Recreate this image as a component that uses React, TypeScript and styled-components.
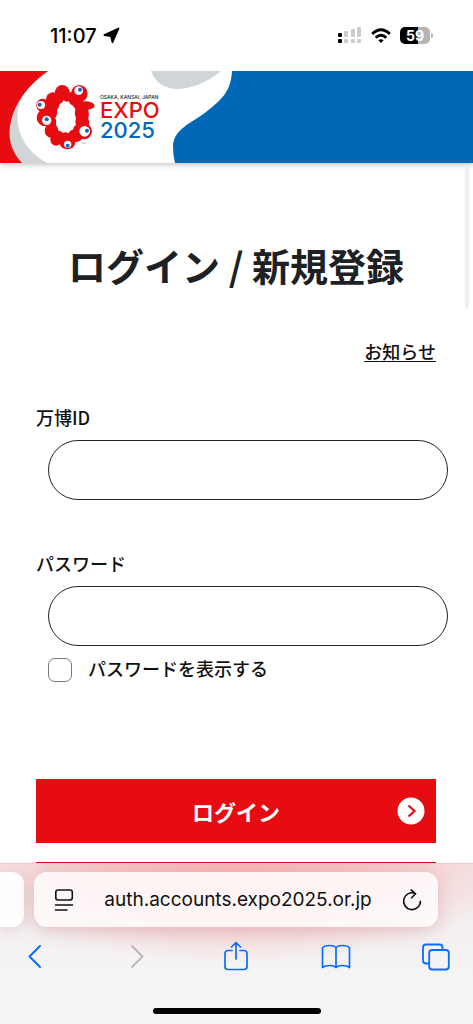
import React from "react";
import styled, { createGlobalStyle } from "styled-components";

const Global = createGlobalStyle`
  *, *::before, *::after { box-sizing: border-box; }
  body { margin: 0; background: #fff; }
  button, input { font: inherit; margin: 0; }
`;

const jp = `"Noto Sans CJK JP", "Noto Sans", sans-serif`;
const ui = `Inter, "Liberation Sans", sans-serif`;
const red = "#e60c12";
const blue = "#0068b7";

const Screen = styled.div`
  display: grid;
  grid-template-rows: auto minmax(0, 1fr) auto;
  height: 100vh;
  background: #fff;
  color: #1d2124;
  font-family: ${jp};
`;

const StatusBar = styled.div`
  display: flex;
  align-items: center;
  justify-content: space-between;
  height: 71px;
  padding: 0 40px 0 50px;
  color: #000;
  font-family: ${ui};
`;

const StatusGroup = styled.div<{ $gap: number }>`
  display: flex;
  align-items: center;
  gap: ${(p) => p.$gap}px;
`;

const Clock = styled.time`
  font-size: 20px;
  font-weight: 500;
  line-height: 24px;
`;

const Battery = styled.div`
  display: flex;
  align-items: center;
  gap: 1px;
`;

const BatteryBody = styled.div`
  width: 30px;
  height: 17px;
  border-radius: 5px;
  background: linear-gradient(90deg, #000 59%, #b5b5b5 59%);
  color: #fff;
  font-size: 14px;
  font-weight: 700;
  line-height: 17px;
  text-align: center;
`;

const BatteryCap = styled.div`
  width: 2px;
  height: 5px;
  border-radius: 0 2px 2px 0;
  background: #b5b5b5;
`;

const Page = styled.div`
  position: relative;
  overflow: hidden;
`;

const ScrollThumb = styled.div`
  position: absolute;
  top: 94px;
  right: 4px;
  width: 4px;
  height: 144px;
  border-radius: 2px;
  background: #f0f0f0;
`;

const Banner = styled.header`
  position: relative;
  display: flex;
  height: 92px;
  background: ${blue};
  box-shadow: 0 2px 5px rgba(0, 0, 0, 0.22);
`;

const Wordmark = styled.div`
  position: absolute;
  top: 23px;
  left: 100px;
  display: flex;
  flex-direction: column;
  font-family: ${ui};
`;

const Place = styled.span`
  color: #222;
  font-size: 5px;
  font-weight: 500;
  line-height: 6px;
`;

const MarkLine = styled.span<{ $color: string }>`
  color: ${(p) => p.$color};
  font-size: 22px;
  font-weight: 500;
  line-height: 20px;
`;

const Content = styled.main`
  display: flex;
  flex-direction: column;
  padding: 0 37px 0 36px;
`;

const Title = styled.h1`
  margin: 74px 0 0;
  font-size: 38px;
  font-weight: 700;
  line-height: 56px;
  text-align: center;
`;

const NewsLink = styled.a`
  align-self: flex-end;
  margin-top: 44px;
  color: #111;
  font-size: 18px;
  font-weight: 500;
  line-height: 28px;
  text-decoration: underline;
  text-decoration-thickness: 1px;
  text-underline-offset: 2px;
`;

const Form = styled.form`
  display: flex;
  flex-direction: column;
  margin-top: 38px;
  color: #111;
  font-size: 18px;
  font-weight: 500;
  line-height: 28px;
`;

const Field = styled.div<{ $after: number }>`
  display: flex;
  flex-direction: column;
  gap: 9px;
  margin-bottom: ${(p) => p.$after}px;
`;

const TextBox = styled.input`
  width: 100%;
  height: 60px;
  margin-left: 12px;
  padding: 0 24px;
  border: 1px solid #222;
  border-radius: 30px;
  background: #fff;
`;

const CheckRow = styled.label`
  display: flex;
  align-items: flex-start;
  gap: 16px;
  margin: 0 0 97px 12px;
`;

const Check = styled.input`
  appearance: none;
  width: 24px;
  height: 24px;
  margin-top: 4px;
  border: 1px solid #777;
  border-radius: 7px;
  background: #fff;
`;

const LoginButton = styled.button`
  display: grid;
  grid-template-columns: 28px 1fr 28px;
  align-items: center;
  height: 64px;
  padding: 0 11px;
  border: 0;
  background: ${red};
  color: #fff;
  font-size: 22px;
  font-weight: 700;
  line-height: 32px;
`;

const ButtonLabel = styled.span`
  grid-column: 2;
`;

const NextPanel = styled.div`
  height: 64px;
  margin-top: 19px;
  border: 2px solid ${red};
`;

const BrowserBar = styled.footer`
  display: flex;
  flex-direction: column;
  height: 161px;
  overflow: hidden;
  border-top: 1px solid #e3cfd1;
  background:
    radial-gradient(ellipse 58% 100px at 50% 0, rgba(250, 165, 165, 0.75) 0%, rgba(248, 175, 175, 0.6) 45%, rgba(248, 200, 200, 0) 100%),
    linear-gradient(#f4e6e7 0, #f4f0f1 70px, #f5f5f5 120px);
`;

const TabStrip = styled.div`
  display: flex;
  gap: 10px;
  padding: 8px 35px 0 0;
`;

const PreviousTab = styled.div`
  width: 24px;
  border-radius: 0 12px 12px 0;
  background: rgba(255, 255, 255, 0.92);
  box-shadow: 0 3px 14px rgba(130, 60, 65, 0.14);
`;

const AddressPill = styled.div`
  display: flex;
  flex: 1;
  align-items: center;
  justify-content: space-between;
  height: 55px;
  padding: 0 15px 0 19px;
  border-radius: 13px;
  background: rgba(255, 251, 251, 0.88);
  box-shadow: 0 4px 18px rgba(150, 50, 55, 0.2);
  color: #111;
  font-family: ${ui};
`;

const Address = styled.span`
  font-size: 19px;
  font-weight: 400;
  line-height: 28px;
`;

const IconButton = styled.button`
  display: grid;
  place-items: center;
  padding: 0;
  border: 0;
  background: none;
  color: inherit;
`;

const Tools = styled.nav`
  display: flex;
  align-items: center;
  justify-content: space-between;
  padding: 13px 22px 0 20px;
  color: #0a6cff;
`;

const HomeIndicator = styled.div`
  align-self: center;
  width: 168px;
  height: 6px;
  margin-top: 36px;
  border-radius: 3px;
  background: #000;
`;

const blobs: number[][] = [
  [108, 112, 52, 74],
  [97, 37, 22, 22], [148, 41, 25, 26], [70, 57, 22, 20], [38, 76, 19, 20],
  [47, 113, 27, 26], [127, 56, 22, 20], [164, 77, 30, 13], [155, 103, 22, 26],
  [158, 128, 20, 20], [163, 154, 23, 24], [137, 168, 22, 18], [112, 187, 24, 21],
  [78, 179, 17, 18], [64, 152, 20, 22], [98, 172, 20, 14], [62, 82, 20, 22],
];

const eyes: number[][] = [
  [146, 32, 13, 150, 29], [33, 75, 12, 29, 74], [50, 121, 14, 50, 118],
  [164, 154, 16, 171, 152], [113, 193, 11, 113, 197],
];

const BannerArt = () => (
  <svg width="240" height="92" viewBox="0 0 240 92" aria-hidden="true">
    <path fill="#fff" d="M0 0H232C231 21 221 29 206 41C190 53 174 58 173 75C173 82 174 87 175 92H0Z" />
    <path fill="#d0d5d8" d="M30 15C16 30 17 45 18 54C21 72 33 84 47 92H0V15Z" />
    <path fill={red} d="M0 0H48C28 14 15 32 11 50C7 67 11 80 22 92H0Z" />
    <path fill="#d0d5d8" d="M151 0H221C207 12 190 18 176 18C163 17 155 11 151 0Z" />
    <g transform="translate(30 9) scale(.3333)">
      {blobs.map(([x, y, rx, ry], i) => (
        <ellipse key={i} cx={x} cy={y} rx={rx} ry={ry} fill={red} />
      ))}
      <path
        fill="#fff"
        d="M101 61Q107 67 116 64Q119 74 129 77Q132 83 136 86Q132 101 138 115Q134 126 138 135Q130 139 129 149Q120 150 115 160Q108 154 99 159Q92 152 85 152Q85 143 78 135Q80 122 76 113Q84 101 81 90Q88 82 89 72Q96 70 101 61Z"
      />
      {eyes.map(([x, y, r, px, py], i) => (
        <g key={i}>
          <circle cx={x} cy={y} r={r} fill="#fff" />
          <circle cx={px} cy={py} r="6" fill="#1565c0" />
        </g>
      ))}
      <path d="M156 188h4m-2 0v4m4 0v-4l2 3l2-3v4" fill="none" stroke="#777" />
    </g>
  </svg>
);

const Line = ({ w, h, children, sw = 2 }: { w: number; h: number; sw?: number; children: React.ReactNode }) => (
  <svg width={w} height={h} viewBox={`0 0 ${w} ${h}`} fill="none" stroke="currentColor" strokeWidth={sw} strokeLinecap="round" strokeLinejoin="round" aria-hidden="true">
    {children}
  </svg>
);

export default function App() {
  return (
    <Screen>
      <Global />
      <StatusBar>
        <StatusGroup $gap={6}>
          <Clock>11:07</Clock>
          <svg width="17" height="17" viewBox="0 0 17 17" aria-hidden="true">
            <path d="M15.5 1.5L9.5 15.2L8 9L1.4 8Z" fill="#000" stroke="#000" strokeWidth="1.8" strokeLinejoin="round" />
          </svg>
        </StatusGroup>
        <StatusGroup $gap={9}>
          <svg width="24" height="17" viewBox="0 0 24 17" aria-hidden="true">
            <g fill="#000"><rect y="6" width="4" height="4" rx="1" /><rect y="12" width="4" height="4" rx="1" /></g>
            <g fill="#ccc">
              <rect x="6" y="4" width="4" height="6" rx="1" /><rect x="13" y="2" width="4" height="8" rx="1" /><rect x="19" width="4" height="10" rx="1" />
              <rect x="6" y="12" width="4" height="4" rx="1" /><rect x="13" y="12" width="4" height="4" rx="1" /><rect x="19" y="12" width="4" height="4" rx="1" />
            </g>
          </svg>
          <svg width="20" height="16" viewBox="0 0 20 16" fill="none" stroke="#000" strokeWidth="2.8" aria-hidden="true">
            <path d="M1.2 6Q10-2.4 18.8 6" /><path d="M4.7 9.7Q10 4.7 15.3 9.7" />
            <path d="M10 15L7.3 12.3Q10 10 12.7 12.3Z" fill="#000" stroke="none" />
          </svg>
          <Battery>
            <BatteryBody>59</BatteryBody>
            <BatteryCap />
          </Battery>
        </StatusGroup>
      </StatusBar>

      <Page>
        <Banner>
          <BannerArt />
          <Wordmark>
            <Place>OSAKA, KANSAI, JAPAN</Place>
            <MarkLine $color={red}>EXPO</MarkLine>
            <MarkLine $color={blue}>2025</MarkLine>
          </Wordmark>
        </Banner>
        <Content>
          <Title>ログイン / 新規登録</Title>
          <NewsLink href="#news">お知らせ</NewsLink>
          <Form onSubmit={(e) => e.preventDefault()}>
            <Field $after={49}>
              <label htmlFor="expo-id">万博ID</label>
              <TextBox id="expo-id" type="text" />
            </Field>
            <Field $after={8}>
              <label htmlFor="password">パスワード</label>
              <TextBox id="password" type="password" />
            </Field>
            <CheckRow>
              <Check type="checkbox" />
              パスワードを表示する
            </CheckRow>
            <LoginButton type="submit">
              <ButtonLabel>ログイン</ButtonLabel>
              <svg width="28" height="28" viewBox="0 0 28 28" fill="none" aria-hidden="true">
                <circle cx="14" cy="14" r="13.5" fill="#fff" />
                <path d="M11.5 8.5L17.5 14L11.5 19.5" stroke={red} strokeWidth="2.2" />
              </svg>
            </LoginButton>
            <NextPanel />
          </Form>
        </Content>
        <ScrollThumb />
      </Page>

      <BrowserBar>
        <TabStrip>
          <PreviousTab />
          <AddressPill>
            <IconButton type="button">
              <Line w={22} h={24} sw={1.6}>
                <rect x="2.8" y="2" width="16.5" height="10" rx="2.2" />
                <path d="M2.5 17H19.5M2.5 22H14" />
              </Line>
            </IconButton>
            <Address>auth.accounts.expo2025.or.jp</Address>
            <IconButton type="button">
              <Line w={22} h={24} sw={1.6}>
                <path d="M14.2 5.4A8.4 8.4 0 1 0 19.4 13.4M10.2 1.8L14.6 5.8L10.6 9.8" />
              </Line>
            </IconButton>
          </AddressPill>
        </TabStrip>
        <Tools>
          <IconButton type="button">
            <Line w={30} h={32}><path d="M20 6L9.5 16.5L20 27" /></Line>
          </IconButton>
          <IconButton type="button">
            <Line w={30} h={32}><path d="M12 6L22.5 16.5L12 27" stroke="#b9b9bb" /></Line>
          </IconButton>
          <IconButton type="button">
            <Line w={30} h={32} sw={1.7}>
              <path d="M11 10.5H7Q4 10.5 4 13.5V26.5Q4 29.5 7 29.5H23Q26 29.5 26 26.5V13.5Q26 10.5 23 10.5H19M15 19V2.5M10.5 7L15 2.5L19.5 7" />
            </Line>
          </IconButton>
          <IconButton type="button">
            <Line w={30} h={32} sw={1.7}>
              <path d="M15 8Q14 5.5 8.5 5.5Q3 5.5 1.5 8V27.5Q4 25.5 8.5 25.5Q13 25.5 15 27.5Q17 25.5 21.5 25.5Q26 25.5 28.5 27.5V8Q27 5.5 21.5 5.5Q16 5.5 15 8V27.5" />
            </Line>
          </IconButton>
          <IconButton type="button">
            <Line w={30} h={32} sw={1.8}>
              <path d="M8 23.5H5Q2 23.5 2 20.5V7.5Q2 4.5 5 4.5H18.5Q21.5 4.5 21.5 7.5V9.5" />
              <rect x="8.2" y="10" width="19.6" height="19.5" rx="3" />
            </Line>
          </IconButton>
        </Tools>
        <HomeIndicator />
      </BrowserBar>
    </Screen>
  );
}
